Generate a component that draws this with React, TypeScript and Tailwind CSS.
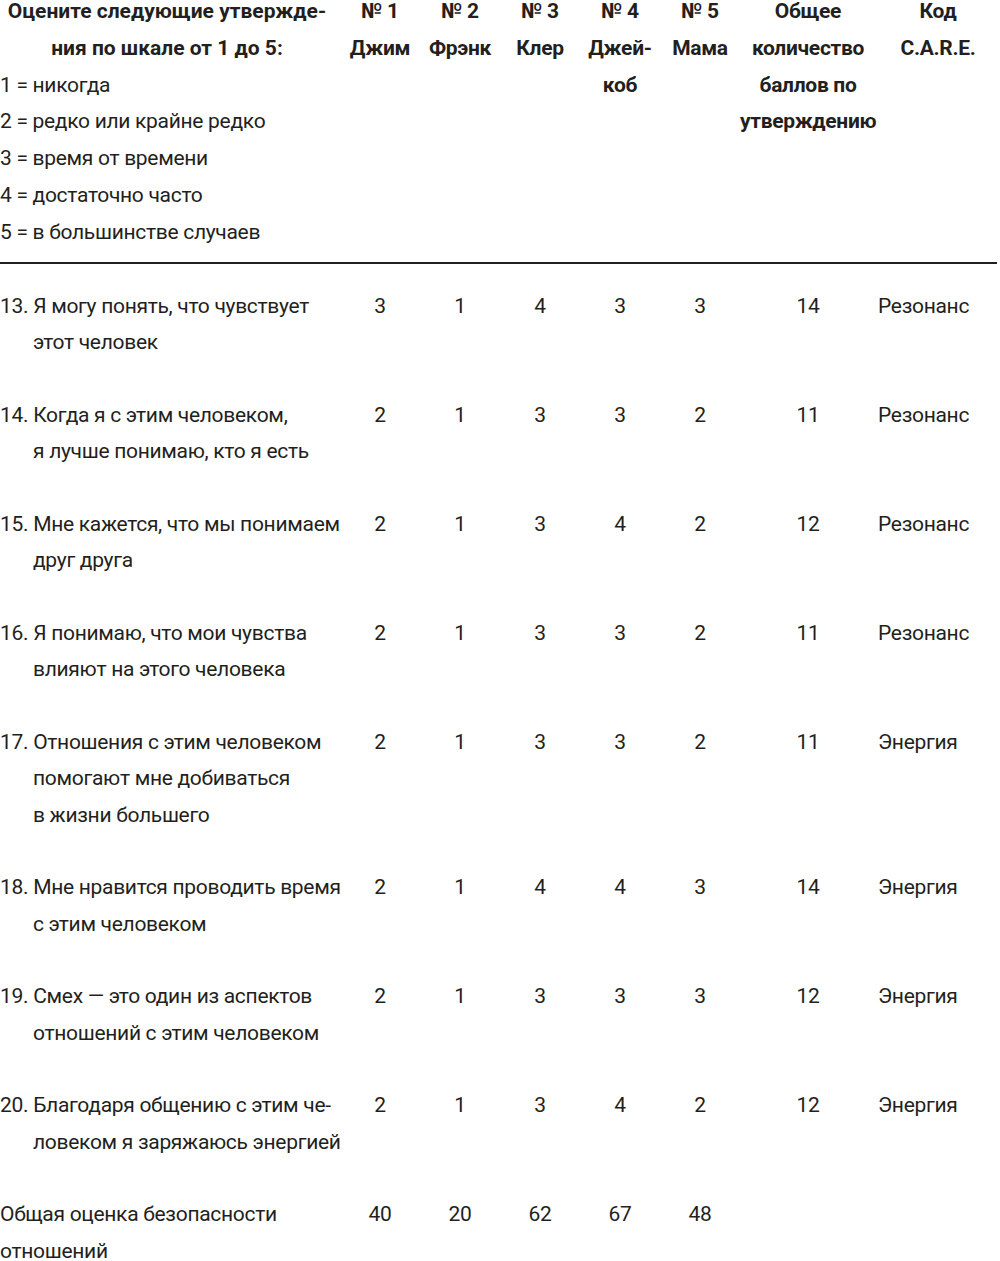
import React from "react";

type Row = { lines: string[]; vals: string[]; total: string; code: string; indent: boolean };

const rows: Row[] = [
  { lines: ["13. Я могу понять, что чувствует", "этот человек"], vals: ["3", "1", "4", "3", "3"], total: "14", code: "Резонанс", indent: true },
  { lines: ["14. Когда я с этим человеком,", "я лучше понимаю, кто я есть"], vals: ["2", "1", "3", "3", "2"], total: "11", code: "Резонанс", indent: true },
  { lines: ["15. Мне кажется, что мы понимаем", "друг друга"], vals: ["2", "1", "3", "4", "2"], total: "12", code: "Резонанс", indent: true },
  { lines: ["16. Я понимаю, что мои чувства", "влияют на этого человека"], vals: ["2", "1", "3", "3", "2"], total: "11", code: "Резонанс", indent: true },
  { lines: ["17. Отношения с этим человеком", "помогают мне добиваться", "в жизни большего"], vals: ["2", "1", "3", "3", "2"], total: "11", code: "Энергия", indent: true },
  { lines: ["18. Мне нравится проводить время", "с этим человеком"], vals: ["2", "1", "4", "4", "3"], total: "14", code: "Энергия", indent: true },
  { lines: ["19. Смех — это один из аспектов", "отношений с этим человеком"], vals: ["2", "1", "3", "3", "3"], total: "12", code: "Энергия", indent: true },
  { lines: ["20. Благодаря общению с этим че-", "ловеком я заряжаюсь энергией"], vals: ["2", "1", "3", "4", "2"], total: "12", code: "Энергия", indent: true },
  { lines: ["Общая оценка безопасности", "отношений"], vals: ["40", "20", "62", "67", "48"], total: "", code: "", indent: false },
];

const grid = "grid grid-cols-[340px_80px_80px_80px_80px_80px_136px_124px]";

export default function App() {
  return (
    <div className="w-[1000px] h-[1261px] bg-white overflow-hidden text-[#231f20] font-['Roboto',sans-serif] text-[21px] leading-[36.8px] tracking-[-0.3px] whitespace-nowrap">
      <div className={`${grid} mt-[-7px]`}>
        <div>
          <div className="font-bold text-center pr-[6px] tracking-[0px]">
            <div>Оцените следующие утвержде-</div>
            <div>ния по шкале от 1 до 5:</div>
          </div>
          <div>1 = никогда</div>
          <div>2 = редко или крайне редко</div>
          <div>3 = время от времени</div>
          <div>4 = достаточно часто</div>
          <div>5 = в большинстве случаев</div>
        </div>
        <div className="font-bold text-center"><div>№ 1</div><div>Джим</div></div>
        <div className="font-bold text-center"><div>№ 2</div><div>Фрэнк</div></div>
        <div className="font-bold text-center"><div>№ 3</div><div>Клер</div></div>
        <div className="font-bold text-center"><div>№ 4</div><div>Джей-</div><div>коб</div></div>
        <div className="font-bold text-center"><div>№ 5</div><div>Мама</div></div>
        <div className="font-bold text-center"><div>Общее</div><div>количество</div><div>баллов по</div><div>утверждению</div></div>
        <div className="font-bold text-center"><div>Код</div><div>C.A.R.E.</div></div>
      </div>
      <div className="mt-[11px] h-[2px] w-[997px] bg-[#231f20]" />
      <div className="mt-[24px] leading-[36.7px]">
        {rows.map((r, i) => (
          <div key={i} className={`${grid} pb-[35.6px]`}>
            <div>
              {r.lines.map((l, j) => (
                <div key={j} className={j > 0 && r.indent ? "pl-[33px]" : ""}>{l}</div>
              ))}
            </div>
            {r.vals.map((v, j) => (
              <div key={j} className="text-center">{v}</div>
            ))}
            <div className="text-center">{r.total}</div>
            <div className="pl-[2px]">{r.code}</div>
          </div>
        ))}
      </div>
    </div>
  );
}
